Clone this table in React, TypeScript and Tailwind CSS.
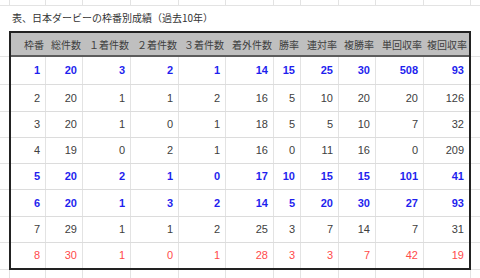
const headers = ["枠番", "総件数", "１着件数", "２着件数", "３着件数", "着外件数", "勝率", "連対率", "複勝率", "単回収率", "複回収率"];

// column widths inside the table (each includes its 1px right gridline, except the last)
const colW = ["w-[35px]", "w-[37px]", "w-[48px]", "w-[48px]", "w-[47px]", "w-[48px]", "w-[27px]", "w-[38px]", "w-[37px]", "w-[48px]", "w-[45px]"];
// same grid for the sheet strips above and below the table
const stripW = ["w-[10px]", "w-[36px]", "w-[37px]", "w-[48px]", "w-[48px]", "w-[47px]", "w-[48px]", "w-[27px]", "w-[38px]", "w-[37px]", "w-[48px]", "w-[47px]"];

type Tone = "blue" | "plain" | "red";

const rows: { tone: Tone; h: string; v: number[] }[] = [
  { tone: "blue", h: "h-[28px]", v: [1, 20, 3, 2, 1, 14, 15, 25, 30, 508, 93] },
  { tone: "plain", h: "h-[27px]", v: [2, 20, 1, 1, 2, 16, 5, 10, 20, 20, 126] },
  { tone: "plain", h: "h-[26px]", v: [3, 20, 1, 0, 1, 18, 5, 5, 10, 7, 32] },
  { tone: "plain", h: "h-[26px]", v: [4, 19, 0, 2, 1, 16, 0, 11, 16, 0, 209] },
  { tone: "blue", h: "h-[26px]", v: [5, 20, 2, 1, 0, 17, 10, 15, 15, 101, 41] },
  { tone: "blue", h: "h-[27px]", v: [6, 20, 1, 3, 2, 14, 5, 20, 30, 27, 93] },
  { tone: "plain", h: "h-[26px]", v: [7, 29, 1, 1, 2, 25, 3, 7, 14, 7, 31] },
  { tone: "red", h: "h-[25px]", v: [8, 30, 1, 0, 1, 28, 3, 3, 7, 42, 19] },
];

const toneClass: Record<Tone, string> = {
  blue: "text-[#1f1fee] font-bold",
  plain: "text-[#404040]",
  red: "text-[#ff4a4a]",
};

const gutterH = ["h-[26px]", "h-[28px]", "h-[27px]", "h-[26px]", "h-[26px]", "h-[26px]", "h-[27px]", "h-[26px]", "h-[27px]"];

function Strip({ h }: { h: string }) {
  return (
    <div className={`flex ${h}`}>
      {stripW.map((w, i) => (
        <div key={i} className={`${w} shrink-0 border-r border-[#e3e3e3]`} />
      ))}
    </div>
  );
}

function Gutter({ w }: { w: string }) {
  return (
    <div className={`${w} flex flex-col`}>
      {gutterH.map((h, i) => (
        <div key={i} className={`${h} border-b border-[#e3e3e3]`} />
      ))}
    </div>
  );
}

export default function App() {
  return (
    <div className="w-[480px] h-[278px] bg-white overflow-hidden font-['Liberation_Sans','Noto_Sans_CJK_JP',sans-serif]">
      {/* sheet row above */}
      <div className="border-b border-[#e3e3e3]">
        <Strip h="h-[5px]" />
      </div>

      {/* title */}
      <div className="h-[25px] flex items-center pb-[2px] pl-[12px] text-[10px] text-[#333] font-['Noto_Sans_CJK_JP',sans-serif]">
        表、日本ダービーの枠番別成績（過去10年）
      </div>

      <div className="flex">
        <Gutter w="w-[9px]" />

        {/* table */}
        <div className="w-[462px] shrink-0 border-2 border-[#222] flex flex-col">
          <div className="h-[22px] bg-[#bfbfbf] flex">
            {headers.map((t, i) => (
              <div
                key={t}
                className={`${colW[i]} shrink-0 flex items-center justify-end pr-[2px] text-[10px] text-[#404040] whitespace-nowrap font-['Noto_Sans_CJK_JP',sans-serif]`}
              >
                {t}
              </div>
            ))}
          </div>
          <div className="h-[2px] bg-[#5c5c5c]" />

          {rows.map((r, ri) => (
            <div
              key={ri}
              className={`${r.h} flex ${ri < rows.length - 1 ? "border-b border-[#dcdcdc]" : ""}`}
            >
              {r.v.map((n, ci) => (
                <div
                  key={ci}
                  className={`${colW[ci]} shrink-0 flex items-center justify-end pr-[5px] text-[11px] ${toneClass[r.tone]} ${ci < 10 ? "border-r border-[#e3e3e3]" : ""}`}
                >
                  {n}
                </div>
              ))}
            </div>
          ))}
        </div>

        <Gutter w="flex-1" />
      </div>

      {/* sheet row below */}
      <Strip h="h-[8px]" />
    </div>
  );
}
